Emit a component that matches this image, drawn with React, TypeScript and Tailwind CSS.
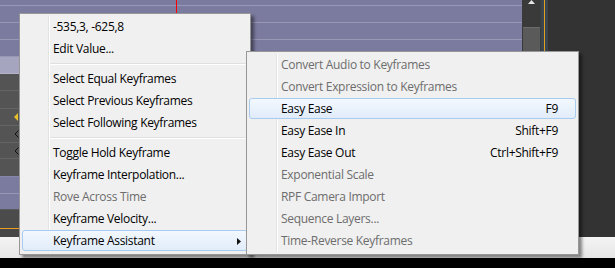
import { Fragment } from 'react'

type Row = { h: number; bg: string; line?: string; mark?: 'key' | 'lt' }

const PURPLE = '#7b7a9f'
const PLINE = '#9897b6'
const DARK = '#545454'
const DLINE = '#646464'

const rows: Row[] = [
  { h: 5, bg: PURPLE, line: PLINE },
  { h: 16, bg: PURPLE, line: PLINE },
  { h: 16, bg: PURPLE, line: PLINE },
  { h: 16, bg: PURPLE, line: PLINE },
  { h: 16, bg: '#a6a5c0', line: '#b3b2ca' },
  { h: 16, bg: DARK, line: DLINE },
  { h: 17, bg: DARK, line: DLINE },
  { h: 16, bg: DARK, line: DLINE, mark: 'key' },
  { h: 16, bg: DARK, line: DLINE, mark: 'lt' },
  { h: 15, bg: DARK, line: DLINE, mark: 'lt' },
  { h: 17, bg: DARK, line: '#8886a8' },
  { h: 16, bg: PURPLE, line: PLINE },
  { h: 15, bg: PURPLE, line: '#5a5a5a' },
  { h: 18, bg: '#4b4b4b', line: '#e8a020' },
  { h: 8, bg: '#474747' },
]

type Item = { label: string; key?: string; off?: boolean; hot?: boolean; sub?: boolean }

const mainMenu: (Item | 'sep')[] = [
  { label: '-535,3, -625,8' },
  { label: 'Edit Value...' },
  'sep',
  { label: 'Select Equal Keyframes' },
  { label: 'Select Previous Keyframes' },
  { label: 'Select Following Keyframes' },
  'sep',
  { label: 'Toggle Hold Keyframe' },
  { label: 'Keyframe Interpolation...' },
  { label: 'Rove Across Time', off: true },
  { label: 'Keyframe Velocity...' },
  { label: 'Keyframe Assistant', hot: true, sub: true },
]

const subMenu: Item[] = [
  { label: 'Convert Audio to Keyframes', off: true },
  { label: 'Convert Expression to Keyframes', off: true },
  { label: 'Easy Ease', key: 'F9', hot: true },
  { label: 'Easy Ease In', key: 'Shift+F9' },
  { label: 'Easy Ease Out', key: 'Ctrl+Shift+F9' },
  { label: 'Exponential Scale', off: true },
  { label: 'RPF Camera Import', off: true },
  { label: 'Sequence Layers...', off: true },
  { label: 'Time-Reverse Keyframes', off: true },
]

function MenuRow({ item, textX }: { item: Item; textX: number }) {
  return (
    <div className="relative h-[22px] flex items-center">
      {item.hot && (
        <div className="absolute left-[2px] right-[2px] top-0 bottom-[1px] rounded-[3px] border border-[#a9cbef] bg-gradient-to-b from-[#f3f8fe] to-[#e1ecfa]" />
      )}
      <span
        className={`relative ${item.off ? 'text-[#6d6d6d]' : 'text-[#000]'}`}
        style={{ paddingLeft: textX }}
      >
        {item.label}
      </span>
      {item.key && <span className="relative ml-auto mr-[20px] text-[#000]">{item.key}</span>}
      {item.sub && (
        <svg className="relative ml-auto mr-[9px]" width="4" height="7" viewBox="0 0 4 7">
          <path d="M0 0 L4 3.5 L0 7 Z" fill="#111" />
        </svg>
      )}
    </div>
  )
}

export default function App() {
  return (
    <div
      className="relative w-[615px] h-[268px] overflow-hidden bg-black flex flex-col text-[12px] leading-none tracking-[-0.3px]"
      style={{ fontFamily: '"Open Sans", "Noto Sans", sans-serif' }}
    >
      {/* timeline behind the menus */}
      <div className="h-[237px] flex">
        <div className="w-[522px] flex flex-col">
          {rows.map((r, i) => (
            <div
              key={i}
              className="flex items-center"
              style={{ height: r.h + (r.line ? 1 : 0), background: r.bg, borderBottom: r.line ? `1px solid ${r.line}` : undefined }}
            >
              {r.mark === 'key' && (
                <svg className="ml-[14px]" width="6" height="8" viewBox="0 0 6 8">
                  <path d="M4 0 L0 4 L4 8 Z" fill="#e8c02a" />
                </svg>
              )}
              {r.mark === 'lt' && (
                <svg className="ml-[14px]" width="6" height="8" viewBox="0 0 6 8">
                  <path d="M4.5 0.5 L1 4 L4.5 7.5" fill="none" stroke="#111" strokeWidth="1" />
                </svg>
              )}
            </div>
          ))}
        </div>
        <div className="w-[19px] flex flex-col bg-[#3a3a3a]">
          <div className="h-[27px] flex justify-center">
            <svg width="7" height="4" viewBox="0 0 7 4">
              <path d="M0 4 L3.5 0 L7 4 Z" fill="#e6e6e6" />
            </svg>
          </div>
          <div className="flex-1 mx-[1px] bg-[#5a5a5a] border-t border-[#6a6a6a]" />
        </div>
        <div className="w-[3px] bg-[#3a4550]" />
        <div className="w-[1px] bg-[#e0a020]" />
        <div className="w-[3px] bg-[#3a4550]" />
        <div className="flex-1 bg-[#333333]" />
      </div>
      <div className="h-[21px] bg-gradient-to-b from-[#f4f4f4] to-[#e6e6e6]" />

      {/* playhead */}
      <div className="absolute left-[176px] top-0 w-[1px] h-[13px] bg-[#ff0000]" />

      {/* context menu */}
      <div className="absolute left-[19px] top-[13px] w-[232px] h-[242px] border border-[#979797] bg-[#f0f0f0] shadow-[3px_3px_3px_rgba(0,0,0,0.45)] pt-[2px]">
        <div className="absolute left-[28px] top-[2px] bottom-[2px] w-[2px] border-l border-[#e2e3e3] border-r border-r-white" />
        {mainMenu.map((m, i) =>
          m === 'sep' ? (
            <div key={i} className="h-[8px] flex items-center pl-[30px] pr-[1px]">
              <div className="w-full h-[2px] border-t border-[#e0e0e0] border-b border-b-white" />
            </div>
          ) : (
            <Fragment key={i}>
              <MenuRow item={m} textX={33} />
            </Fragment>
          )
        )}
      </div>

      {/* submenu */}
      <div className="absolute left-[246px] top-[51px] w-[333px] h-[204px] border border-[#979797] bg-[#f0f0f0] shadow-[3px_3px_3px_rgba(0,0,0,0.45)] pt-[2px]">
        <div className="absolute left-[29px] top-[2px] bottom-[2px] w-[2px] border-l border-[#e2e3e3] border-r border-r-white" />
        {subMenu.map((m, i) => (
          <MenuRow key={i} item={m} textX={34} />
        ))}
      </div>
    </div>
  )
}
